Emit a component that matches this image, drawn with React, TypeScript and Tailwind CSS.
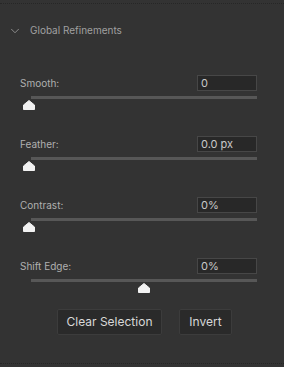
import { ChevronDown } from 'lucide-react';

interface SliderRowProps {
  label: string;
  value: string;
  position: number;
}

function Thumb() {
  return (
    <svg width="12" height="10" viewBox="0 0 12 10" className="block">
      <path d="M6 0.5 L11.5 5 L11.5 9.5 L0.5 9.5 L0.5 5 Z" fill="#f2f2f2" stroke="#f2f2f2" strokeLinejoin="round" />
    </svg>
  );
}

function SliderRow({ label, value, position }: SliderRowProps) {
  return (
    <div className="flex flex-col">
      <div className="flex items-center justify-between pl-5 pr-[27px]">
        <span className="text-[10px] text-[#b0b0b0]">{label}</span>
        <div className="flex h-4 w-[60px] items-center border border-[#474747] bg-[#282828] px-[3px] text-[11px] text-[#c8c8c8]">
          {value}
        </div>
      </div>
      <div className="ml-[31px] mr-[27px] mt-[5px] h-[3px] bg-[#575757]" />
      <div className="relative ml-[29px] mr-[25px] mt-[1px] h-[11px]">
        <div
          className="absolute top-0 -ml-[6px]"
          style={{ left: `${position * 100}%` }}
        >
          <Thumb />
        </div>
      </div>
    </div>
  );
}

export default function App() {
  const rows: SliderRowProps[] = [
    { label: 'Smooth:', value: '0', position: 0 },
    { label: 'Feather:', value: '0.0 px', position: 0 },
    { label: 'Contrast:', value: '0%', position: 0 },
    { label: 'Shift Edge:', value: '0%', position: 0.5 },
  ];

  return (
    <div
      className="h-[367px] w-[284px] bg-[#333333]"
      style={{ fontFamily: 'Inter, "Noto Sans", sans-serif' }}
    >
      <div className="h-[3px]" />
      <div className="h-px border-t border-dotted border-[#262626]" />
      <div className="flex items-center gap-[8px] pl-[8px] pt-[19px]">
        <ChevronDown size={14} strokeWidth={1.3} className="text-[#a8a8a8]" />
        <span className="text-[10px] text-[#a0a0a0]">Global Refinements</span>
      </div>
      <div className="mt-[37px] flex flex-col gap-[25px]">
        {rows.map((row) => (
          <SliderRow key={row.label} {...row} />
        ))}
      </div>
      <div className="mt-[15px] flex justify-center gap-[17px] pl-[5px]">
        <button className="h-[26px] w-[105px] rounded-[2px] border border-[#3c3c3c] bg-[#2a2a2a] text-[12px] text-[#d8d8d8]">
          Clear Selection
        </button>
        <button className="h-[26px] w-[53px] rounded-[2px] border border-[#3c3c3c] bg-[#2a2a2a] text-[12px] text-[#d8d8d8]">
          Invert
        </button>
      </div>
      <div className="mt-[28px] h-px border-t border-dotted border-[#262626]" />
    </div>
  );
}
